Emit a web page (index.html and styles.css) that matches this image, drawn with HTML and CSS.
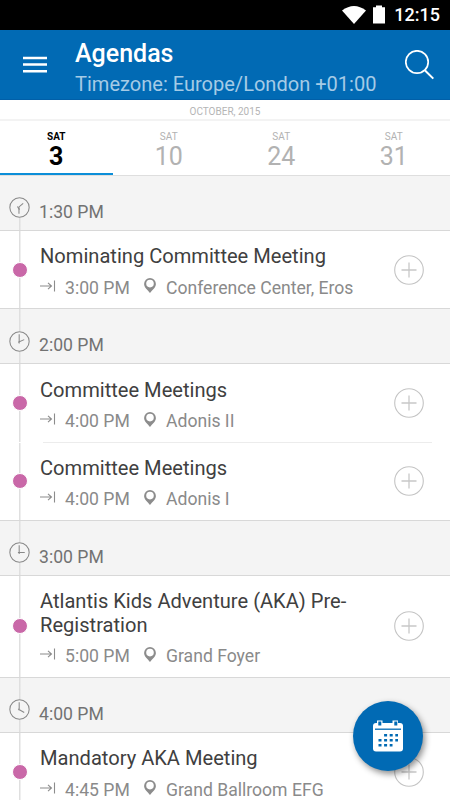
FILE: index.html
```html
<!DOCTYPE html>
<html lang="en">
<head>
<meta charset="utf-8">
<title>Agendas</title>
<link rel="stylesheet" href="styles.css">
</head>
<body>
<svg class="defs" width="0" height="0">
  <symbol id="arrow" viewBox="0 0 16 12"><path d="M0 6H11.5M8 2.8L11.5 6L8 9.2M14.5 0.5V11.5" fill="none" stroke="#8c8c8c" stroke-width="1.1"/></symbol>
  <symbol id="pin" viewBox="0 0 12 15"><path fill="#8c8c8c" fill-rule="evenodd" d="M6 0A5.9 5.9 0 0 0 0.1 5.9C0.1 9.6 3.8 11.7 6 15C8.2 11.7 11.9 9.6 11.9 5.9A5.9 5.9 0 0 0 6 0ZM6 1.8A3.8 3.8 0 1 1 6 9.4A3.8 3.8 0 1 1 6 1.8Z"/></symbol>
  <symbol id="plus" viewBox="0 0 30 30"><path d="M15 7.5V22.5M7.5 15H22.5" stroke="#c8c8c8" stroke-width="1.3"/><circle cx="15" cy="15" r="14.3" fill="none" stroke="#c4c4c4" stroke-width="1.1"/></symbol>
</svg>
<div class="screen">
  <div class="status">
    <svg class="wifi" width="24" height="18" viewBox="0 0 24 18"><path fill="#fff" d="M0 4.6Q12 -4.4 24 4.6L12 18Z"/></svg>
    <svg class="battery" width="12" height="19" viewBox="0 0 12 19"><path fill="#fff" d="M3 0.5H9V2.3H12V18.5H0V2.3H3Z"/></svg>
    <span>12:15</span>
  </div>
  <header class="bar">
    <svg class="menu" width="24" height="17" viewBox="0 0 24 17"><path stroke="#fff" stroke-width="2.4" d="M0 2H24M0 8.5H24M0 15.2H24"/></svg>
    <div class="titles"><h1>Agendas</h1><p>Timezone: Europe/London +01:00</p></div>
    <svg class="search" width="30" height="30" viewBox="0 0 30 30"><circle cx="12" cy="12" r="11.2" fill="none" stroke="#fff" stroke-width="1.7"/><path d="M19.8 20.2L28.3 28.6" stroke="#fff" stroke-width="2"/></svg>
  </header>
  <div class="month">OCTOBER, 2015</div>
  <nav class="days">
    <div class="day active"><small>SAT</small><b>3</b></div>
    <div class="day"><small>SAT</small><b>10</b></div>
    <div class="day"><small>SAT</small><b>24</b></div>
    <div class="day"><small>SAT</small><b>31</b></div>
  </nav>
  <main>
    <div class="slot first"><svg class="clock" viewBox="0 0 20 20"><circle cx="10" cy="10" r="9.2"/><path d="M9.5 16V9.5L13.5 6"/><path d="M8 9L10 12"/></svg><span>1:30 PM</span></div>
    <div class="item"><i class="dot"></i><div class="text"><h2>Nominating Committee Meeting</h2><div class="meta"><svg class="arrow"><use href="#arrow"/></svg><span class="end">3:00 PM</span><svg class="pin"><use href="#pin"/></svg><span>Conference Center, Eros</span></div></div><svg class="plus"><use href="#plus"/></svg></div>
    <div class="slot"><svg class="clock" viewBox="0 0 20 20"><circle cx="10" cy="10" r="9.2"/><path d="M9.7 3V12M8.7 10.8L14.5 8.2"/></svg><span>2:00 PM</span></div>
    <div class="item inner"><i class="dot"></i><div class="text"><h2>Committee Meetings</h2><div class="meta"><svg class="arrow"><use href="#arrow"/></svg><span class="end">4:00 PM</span><svg class="pin"><use href="#pin"/></svg><span>Adonis II</span></div></div><svg class="plus"><use href="#plus"/></svg></div>
    <div class="item"><i class="dot"></i><div class="text"><h2>Committee Meetings</h2><div class="meta"><svg class="arrow"><use href="#arrow"/></svg><span class="end">4:00 PM</span><svg class="pin"><use href="#pin"/></svg><span>Adonis I</span></div></div><svg class="plus"><use href="#plus"/></svg></div>
    <div class="slot"><svg class="clock" viewBox="0 0 20 20"><circle cx="10" cy="10" r="9.2"/><path d="M9.7 3V11.5M8.5 10H15"/></svg><span>3:00 PM</span></div>
    <div class="item tall"><i class="dot"></i><div class="text"><h2>Atlantis Kids Adventure (AKA) Pre-<br>Registration</h2><div class="meta"><svg class="arrow"><use href="#arrow"/></svg><span class="end">5:00 PM</span><svg class="pin"><use href="#pin"/></svg><span>Grand Foyer</span></div></div><svg class="plus"><use href="#plus"/></svg></div>
    <div class="slot"><svg class="clock" viewBox="0 0 20 20"><circle cx="10" cy="10" r="9.2"/><path d="M9.7 3V11M8.7 9.5L14.5 12.8"/></svg><span>4:00 PM</span></div>
    <div class="item"><i class="dot"></i><div class="text"><h2>Mandatory AKA Meeting</h2><div class="meta"><svg class="arrow"><use href="#arrow"/></svg><span class="end">4:45 PM</span><svg class="pin"><use href="#pin"/></svg><span>Grand Ballroom EFG</span></div></div><svg class="plus"><use href="#plus"/></svg></div>
  </main>
  <div class="fab">
    <svg width="32" height="32" viewBox="0 0 32 32"><rect x="1" y="3" width="30" height="28.5" rx="3" fill="#fff"/><rect x="5" y="0.5" width="5.5" height="6" fill="#fff"/><rect x="20.5" y="0.5" width="5.5" height="6" fill="#fff"/><path stroke="#016ab4" stroke-width="3" d="M7.8 1.5V5.5M23.8 1.5V5.5"/><path stroke="#016ab4" stroke-width="1.3" d="M3 9.2H29"/><path stroke="#016ab4" stroke-width="2.6" stroke-dasharray="3 2.6" d="M12.1 15.2H26M6.5 20.2H26M6.5 25.2H20.5"/></svg>
  </div>
</div>
</body>
</html>
```
FILE: styles.css
```css
* { box-sizing: border-box; margin: 0; padding: 0; }
body { font-family: Roboto, sans-serif; background: #fff; overflow: hidden; }
.defs { position: absolute; }
.screen { position: relative; width: 450px; height: 800px; overflow: hidden; }
.status { height: 30px; background: #000; color: #fff; display: flex; align-items: center; justify-content: flex-end; padding-right: 10px; font-size: 18px; font-weight: 500; line-height: 32px; }
.wifi { margin-right: 7px; margin-bottom: 1px; }
.battery { margin-right: 9px; margin-bottom: 1px; }
.bar { height: 70px; background: #016ab4; color: #fff; display: flex; border-bottom: 1px solid #015fa8; }
.menu { margin: 26px 28px 0 23px; }
.titles { flex: 1; padding-top: 9px; white-space: nowrap; }
h1 { font-size: 25px; line-height: 29px; font-weight: 500; }
.titles p { font-size: 20.05px; line-height: 24px; margin-top: 4px; color: #a5cbe6; }
.search { margin: 20px 15px 0 0; }
.month { height: 21px; border-bottom: 2px solid #f3f3f3; text-align: center; font-size: 10px; line-height: 23px; color: #b5b5b5; }
.days { height: 54.8px; display: grid; grid-template-columns: repeat(4, 1fr); border-bottom: 1px solid #dedede; }
.day { display: flex; flex-direction: column; align-items: center; color: #b2b2b2; padding-top: 10px; }
.day small { font-size: 10px; line-height: 12px; }
.day b { font-size: 25px; line-height: 28px; font-weight: 400; }
.active { color: #000; border-bottom: 2px solid #0b8ed8; }
.active small { font-weight: 700; }
.active b { font-weight: 700; }
.slot, .item { background-image: linear-gradient(#dfdfdf, #dfdfdf); background-repeat: no-repeat; background-size: 1.5px 100%; background-position: 19px 0; border-bottom: 1px solid #d8d8d8; }
.slot { height: 55.2px; background-color: #f4f4f4; display: flex; padding-left: 9px; }
.first { background-position: 19px 30px; }
.clock { width: 21px; height: 21px; margin: 21.5px 9px 0 0; fill: none; stroke: #888; stroke-width: 1; background: #f4f4f4; }
.slot span { font-size: 17.6px; line-height: 22px; margin-top: 25px; color: #727272; }
.item { height: 78.2px; display: flex; align-items: center; padding-left: 12px; padding-right: 26px; }
.tall { height: 101.8px; }
.inner { border-bottom: 0; background-image: linear-gradient(#dfdfdf, #dfdfdf), linear-gradient(#ececec, #ececec); background-size: 1.5px calc(100% - 1px), 389px 1px; background-position: 19px 0, 43px 100%; }
.dot { width: 16px; height: 16px; border-radius: 50%; background: #c968a8; border: 0.5px solid #fff; margin-right: 12px; }
.text { flex: 1; align-self: flex-start; padding-top: 14.2px; }
h2 { font-size: 20.1px; line-height: 23.5px; font-weight: 400; color: #404040; white-space: nowrap; }
.meta { display: flex; font-size: 17.6px; line-height: 22px; margin-top: 8px; color: #8a8a8a; white-space: nowrap; }
.arrow { width: 16px; height: 12px; margin: 3px 9px 0 0; }
.end { width: 78px; }
.pin { width: 12px; height: 15px; margin: 1.5px 10px 0 1px; }
.plus { width: 30px; height: 30px; }
.fab { position: absolute; left: 353px; top: 701px; width: 70px; height: 70px; border-radius: 50%; background: #016ab4; box-shadow: 2px 3px 6px rgba(0,0,0,.45); display: flex; align-items: center; justify-content: center; }
```
